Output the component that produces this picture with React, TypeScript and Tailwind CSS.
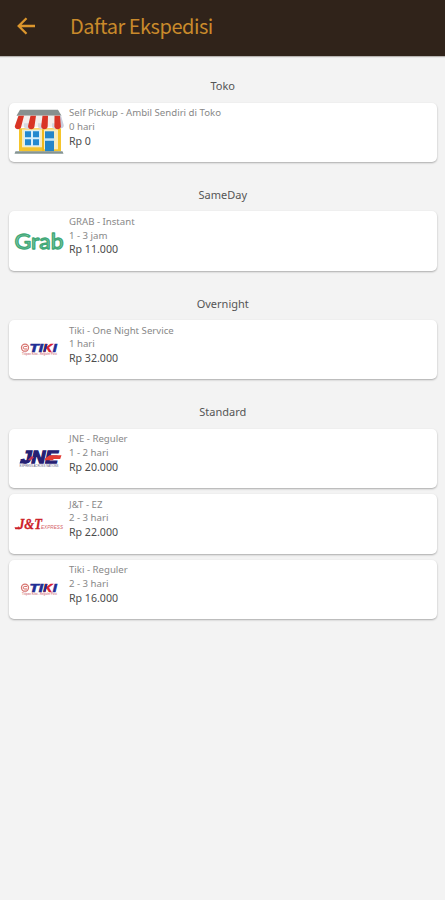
import React from "react";

type LogoName = "store" | "grab" | "tiki" | "jne" | "jnt";

interface Service {
  logo: LogoName;
  name: string;
  eta: string;
  price: string;
}

interface Group {
  title: string;
  services: Service[];
}

const groups: Group[] = [
  {
    title: "Toko",
    services: [{ logo: "store", name: "Self Pickup - Ambil Sendiri di Toko", eta: "0 hari", price: "Rp 0" }],
  },
  {
    title: "SameDay",
    services: [{ logo: "grab", name: "GRAB - Instant", eta: "1 - 3 jam", price: "Rp 11.000" }],
  },
  {
    title: "Overnight",
    services: [{ logo: "tiki", name: "Tiki - One Night Service", eta: "1 hari", price: "Rp 32.000" }],
  },
  {
    title: "Standard",
    services: [
      { logo: "jne", name: "JNE - Reguler", eta: "1 - 2 hari", price: "Rp 20.000" },
      { logo: "jnt", name: "J&T - EZ", eta: "2 - 3 hari", price: "Rp 22.000" },
      { logo: "tiki", name: "Tiki - Reguler", eta: "2 - 3 hari", price: "Rp 16.000" },
    ],
  },
];

function StoreLogo() {
  const red = [0, 2, 4, 6];
  const white = [1, 3, 5];
  return (
    <svg viewBox="0 -1.300 50 50" className="h-[50px] w-[50px]">
      <rect x="5" y="20" width="42" height="23" fill="#f5c52b" />
      <rect x="8" y="21" width="36" height="20" fill="#f7ecc0" />
      <rect x="8" y="39" width="20" height="4" fill="#f3c32d" />
      <rect x="10" y="22" width="16" height="16" fill="#d9effa" />
      <path d="M11 23h6v6h-6zM19 23h6v6h-6zM11 31h6v6h-6zM19 31h6v6h-6z" fill="#2489cf" />
      <rect x="28" y="21" width="2" height="22" fill="#f0b91c" />
      <rect x="31" y="23" width="9" height="20" fill="#2385c9" />
      <path d="M30.500 30h10v2.500h-10z" fill="#c5e7f7" />
      <path d="M1.500 43h47l1 2.500H.5z" fill="#859493" />
      <path d="M6 1.500h38l3.500 6H2.500z" fill="#87908f" />
      <path d="M4 7.500h43l2.500 11H.5z" fill="#f3eeec" />
      {white.map((i) => (
        <path key={i} d={`M${3 + i * 7} 15h7v3c0 3.500-7 3.500-7 0z`} fill="#d6d8e0" />
      ))}
      <path d="M44.500 7.500h2.500l2.800 9.500c0 4-5 4-5 0z" fill="#c8cede" />
      {red.map((i) => (
        <path
          key={i}
          d={`M${4.5 + i * 6} 7.500h5.500L${7.3 + i * 6.6} 18c0 4-6.500 4-6.500 0z`}
          fill="#d93425"
        />
      ))}
    </svg>
  );
}

function GrabLogo() {
  return (
    <svg viewBox="0 0 50 36" className="h-[36px] w-[50px]">
      <text
        x="0.500"
        y="25.500"
        textLength="49"
        lengthAdjust="spacingAndGlyphs"
        fontFamily="Lato, sans-serif"
        fontSize="22"
        fontWeight="400"
        fill="#8bd0af"
        stroke="#42a878"
        strokeWidth="1.300"
        strokeLinejoin="round"
      >
        Grab
      </text>
    </svg>
  );
}

function TikiLogo() {
  return (
    <svg viewBox="0 0 50 24" className="h-[24px] w-[50px]" fontFamily="'Liberation Sans', Arial, sans-serif">
      <circle cx="11" cy="9.700" r="3.500" fill="none" stroke="#d87570" strokeWidth="1.300" />
      <path d="M13 8.400h-2.300a1.300 1.300 0 0 0 0 2.600H13" fill="none" stroke="#d4605c" strokeWidth="1" />
      <g fontSize="10.500" fontWeight="700" fontStyle="italic" strokeWidth="0.600">
        <text x="15.500" y="13.500" textLength="13.500" lengthAdjust="spacingAndGlyphs" fill="#1f2e94" stroke="#1f2e94">
          TI
        </text>
        <text x="29.300" y="13.500" textLength="9" lengthAdjust="spacingAndGlyphs" fill="#d9202d" stroke="#d9202d">
          K
        </text>
        <text x="38.800" y="13.500" textLength="4" lengthAdjust="spacingAndGlyphs" fill="#1f2e94" stroke="#1f2e94">
          I
        </text>
      </g>
      <path d="M29.300 13.700l2.100-7.800h2.200l-2.100 7.800z" fill="#1f2e94" />
      <text x="8" y="16.800" fontSize="2.800" textLength="35" lengthAdjust="spacingAndGlyphs" fontWeight="700" fill="#d7838e">
        Titipan Kilat - Reguler Post
      </text>
    </svg>
  );
}

function JneLogo() {
  return (
    <svg viewBox="0 0 50 32" className="h-[32px] w-[50px]" fontFamily="'Liberation Sans', Arial, sans-serif">
      <text
        x="7"
        y="21"
        fontSize="17"
        fontWeight="700"
        fontStyle="italic"
        textLength="37"
        lengthAdjust="spacingAndGlyphs"
        fill="#252073"
        stroke="#252073"
        strokeWidth="1.300"
      >
        JNE
      </text>
      <path d="M6.500 18.500h7l-1 3H5.500z" fill="#252073" />
      <path d="M14 18l3.500-4 2.500 1.500-3.500 3z" fill="#c63554" />
      <path d="M31 16.500l4.500-3.200h12l-1.300 3.700H40l-1.500 1.300h-8z" fill="#e33b34" />
      <text x="5.500" y="25.300" fontSize="2.800" textLength="39" lengthAdjust="spacingAndGlyphs" fill="#5a5680">
        EXPRESS ACROSS NATIONS
      </text>
    </svg>
  );
}

function JntLogo() {
  return (
    <svg viewBox="0 0 50 28" className="h-[28px] w-[50px]">
      <text
        x="4"
        y="19"
        fontFamily="'Liberation Serif', 'Times New Roman', serif"
        fontSize="15.500"
        fontWeight="700"
        fontStyle="italic"
        textLength="24"
        lengthAdjust="spacingAndGlyphs"
        fill="#cc2027"
        stroke="#cc2027"
        strokeWidth="0.300"
      >
        J&amp;T
      </text>
      <path d="M.5 17.200h6l-1 2H1.300z" fill="#cc2027" />
      <text
        x="27"
        y="19"
        fontFamily="'Liberation Sans', Arial, sans-serif"
        fontSize="6"
        fontStyle="italic"
        textLength="22"
        lengthAdjust="spacingAndGlyphs"
        fill="#d5646a"
      >
        EXPRESS
      </text>
    </svg>
  );
}

const logos: Record<LogoName, () => React.ReactElement> = {
  store: StoreLogo,
  grab: GrabLogo,
  tiki: TikiLogo,
  jne: JneLogo,
  jnt: JntLogo,
};

function ServiceCard({ service }: { service: Service }) {
  const Logo = logos[service.logo];
  return (
    <li className="mb-[6.200px] flex h-[59.400px] rounded-[5px] bg-white pl-[5px] shadow-[0_1px_2px_rgba(0,0,0,0.300)]">
      <div className="flex w-[50px] shrink-0 items-center justify-center">
        <Logo />
      </div>
      <div className="pl-[5px] pt-[3.500px] text-[9.650px] leading-[13.700px] text-[#888888]">
        <p className="whitespace-nowrap">{service.name}</p>
        <p>{service.eta}</p>
        <p className="text-[10.600px] leading-[14.500px] text-[#4c4c4c]">{service.price}</p>
      </div>
    </li>
  );
}

export default function App() {
  return (
    <div className="min-h-[900px] w-full bg-[#f3f3f3] font-['Noto_Sans',sans-serif]">
      <header className="flex h-14 items-center bg-[#30231a] pb-[4px] text-[#c98a2b] shadow-[0_1px_1px_rgba(48,35,26,0.300)]">
        <button type="button" aria-label="Kembali" className="ml-[17px] block">
          <svg viewBox="0 0 18 18" className="h-[18px] w-[18px]" fill="none" stroke="#dc962d" strokeWidth="2.300">
            <path d="M18 9H2M9.500 1.200L1.700 9l7.800 7.800" />
          </svg>
        </button>
        <h1 className="ml-[35px] font-['Noto_Sans_CJK_SC',sans-serif] text-[20px] leading-6 tracking-[-0.480px]">
          Daftar Ekspedisi
        </h1>
      </header>
      <main className="pt-[3.600px] pr-[8.500px] pl-[9px]">
        {groups.map((group) => (
          <section key={group.title} className="pt-[18.100px]">
            <h2 className="mb-[9px] pt-[0.500px] text-center text-[11px] leading-[15.500px] text-[#555555]">
              {group.title}
            </h2>
            <ul>
              {group.services.map((service) => (
                <ServiceCard key={service.name} service={service} />
              ))}
            </ul>
          </section>
        ))}
      </main>
    </div>
  );
}
